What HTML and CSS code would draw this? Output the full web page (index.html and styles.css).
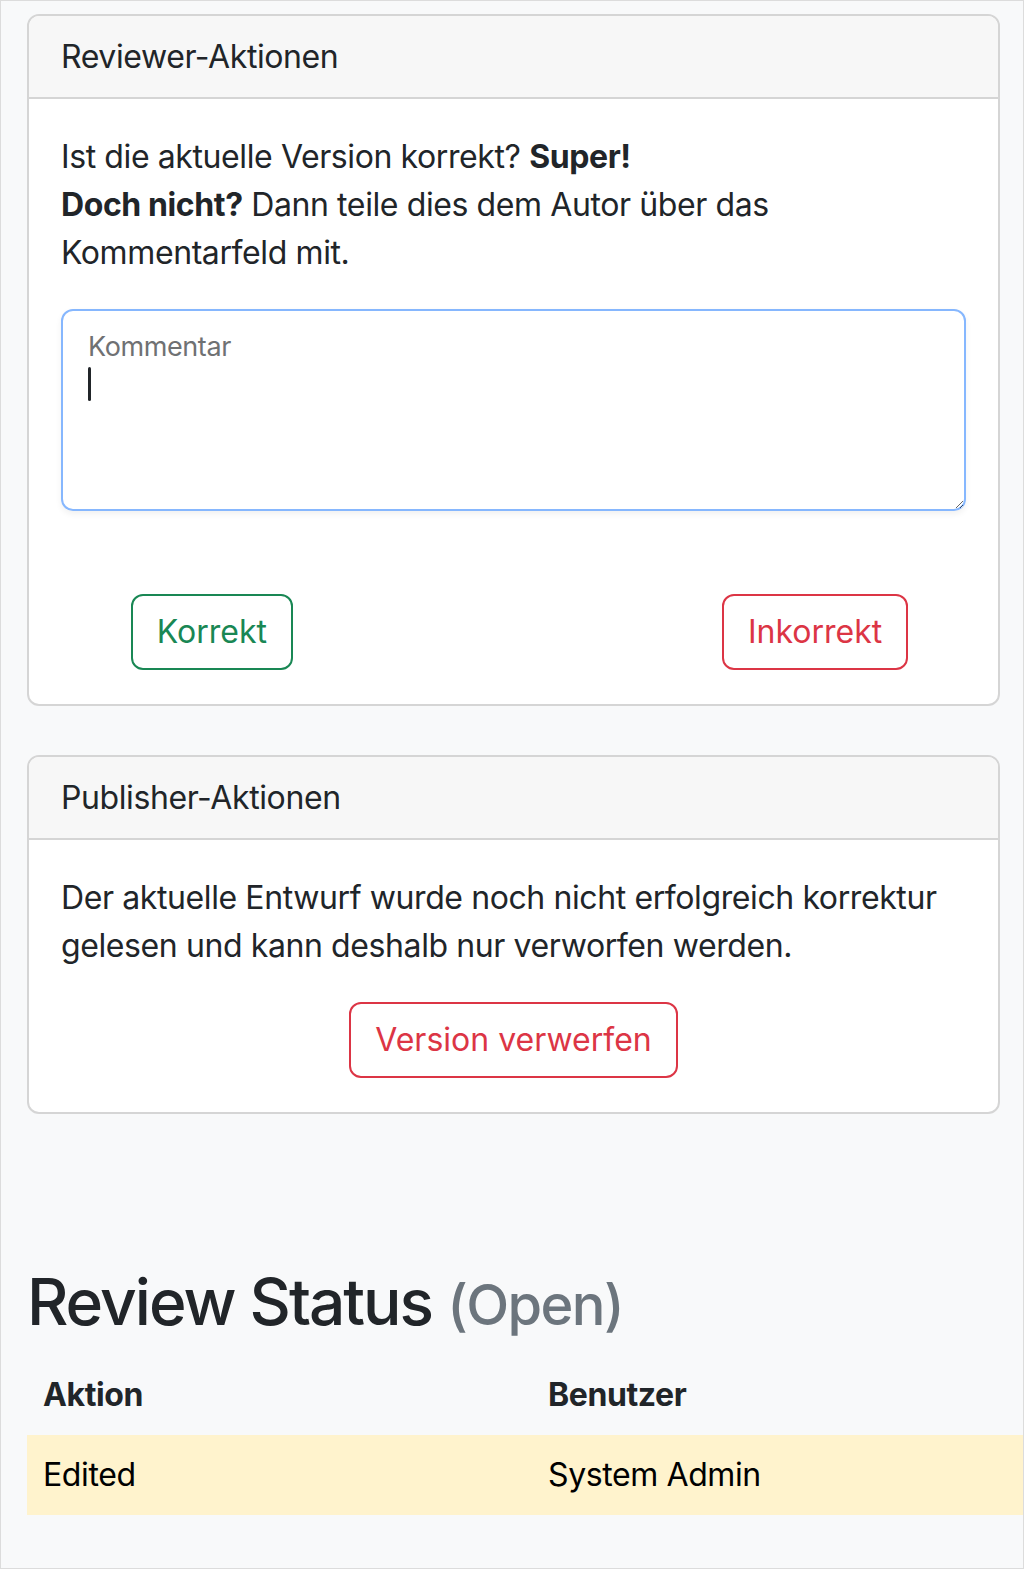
FILE: index.html
```html
<!DOCTYPE html>
<html lang="de">
<head>
    <meta charset="UTF-8">
    <meta name="viewport" content="width=device-width, initial-scale=1.0">
    <title>Review</title>
    <link rel="stylesheet" href="styles.css">
</head>
<body>

<div class="page">

    <div class="card">
        <div class="card-header">Reviewer-Aktionen</div>
        <div class="card-body">
            <p>Ist die aktuelle Version korrekt? <b>Super!</b><br>
            <b>Doch nicht?</b> Dann teile dies dem Autor über das Kommentarfeld mit.</p>

            <div class="floating">
                <textarea id="comment"></textarea>
                <label for="comment">Kommentar</label>
                <span class="caret"></span>
            </div>

            <div class="decision-row">
                <div class="col"><button class="btn btn-success">Korrekt</button></div>
                <div class="col"></div>
                <div class="col"><button class="btn btn-danger">Inkorrekt</button></div>
            </div>
        </div>
    </div>

    <div class="card card-publisher">
        <div class="card-header">Publisher-Aktionen</div>
        <div class="card-body">
            <p>Der aktuelle Entwurf wurde noch nicht erfolgreich korrektur gelesen und kann deshalb nur verworfen werden.</p>
            <div class="center">
                <button class="btn btn-danger">Version verwerfen</button>
            </div>
        </div>
    </div>

    <h1 class="status-title">Review Status <small>(Open)</small></h1>

    <div class="table-wrap">
        <table class="status-table">
            <thead>
                <tr>
                    <th>Aktion</th>
                    <th>Benutzer</th>
                </tr>
            </thead>
            <tbody>
                <tr class="row-warning">
                    <td>Edited</td>
                    <td>System Admin</td>
                </tr>
            </tbody>
        </table>
    </div>

</div>

</body>
</html>
```

FILE: styles.css
```css
* { box-sizing: border-box; }
html { background-color: #f8f9fa; }
body {
    margin: 0;
    min-height: 100vh;
    border: 1px solid #dcdcdc;
    background-color: #f8f9fa;
    color: #212529;
    font-family: Inter, "Noto Sans", sans-serif;
    font-size: 32px;
    line-height: 1.5;
    letter-spacing: -0.4px;
}
.page { padding: 13px 23px 40px 26px; }

.card {
    background-color: #fff;
    border: 2px solid #d5d5d5;
    border-radius: 12px;
    overflow: hidden;
}
.card-header {
    background-color: #f7f7f7;
    padding: 17px 32px 16px;
    border-bottom: 2px solid #d5d5d5;
}
.card-body { padding: 34px 32px; }
.card-body p { margin: 0 0 32px 0; }
.card-publisher { margin-top: 49px; }

.floating { position: relative; }
.floating textarea {
    display: block;
    width: 100%;
    height: 202px;
    padding: 50px 24px 12px;
    border: 2px solid #86b7fe;
    border-radius: 12px;
    font: inherit;
    resize: vertical;
    outline: none;
    box-shadow: 0 3px 6px rgba(0,0,0,0.06);
}
.floating label {
    position: absolute;
    left: 27px;
    top: 18px;
    font-size: 27px;
    line-height: 1.5;
    color: #6f7173;
}
.floating .caret {
    position: absolute;
    left: 27px;
    top: 58px;
    width: 3px;
    height: 34px;
    border-radius: 2px;
    background-color: #212529;
}

.decision-row {
    display: grid;
    grid-template-columns: 1fr 1fr 1fr;
    margin-top: 83px;
}
.col { display: flex; justify-content: center; }
.center { display: flex; justify-content: center; }

.btn {
    font: inherit;
    background-color: transparent;
    padding: 12px 24px;
    border: 2px solid;
    border-radius: 12px;
    cursor: pointer;
}
.btn-success { color: #198754; border-color: #198754; }
.btn-danger { color: #dc3545; border-color: #dc3545; }

.status-title {
    margin: 150px 0 14px 0;
    font-size: 64px;
    font-weight: 500;
    line-height: 1.2;
    letter-spacing: -2px;
}
.status-title small { font-size: 0.875em; color: #6c757d; letter-spacing: -1.6px; }

.table-wrap { margin-right: -23px; }
.status-table { width: 100%; border-collapse: collapse; }
.status-table th, .status-table td {
    text-align: left;
    padding: 16px;
}
.status-table th:first-child { width: 505px; }
.status-table th { font-weight: 700; }
.row-warning td { background-color: #fff3cd; color: #000; }
```
